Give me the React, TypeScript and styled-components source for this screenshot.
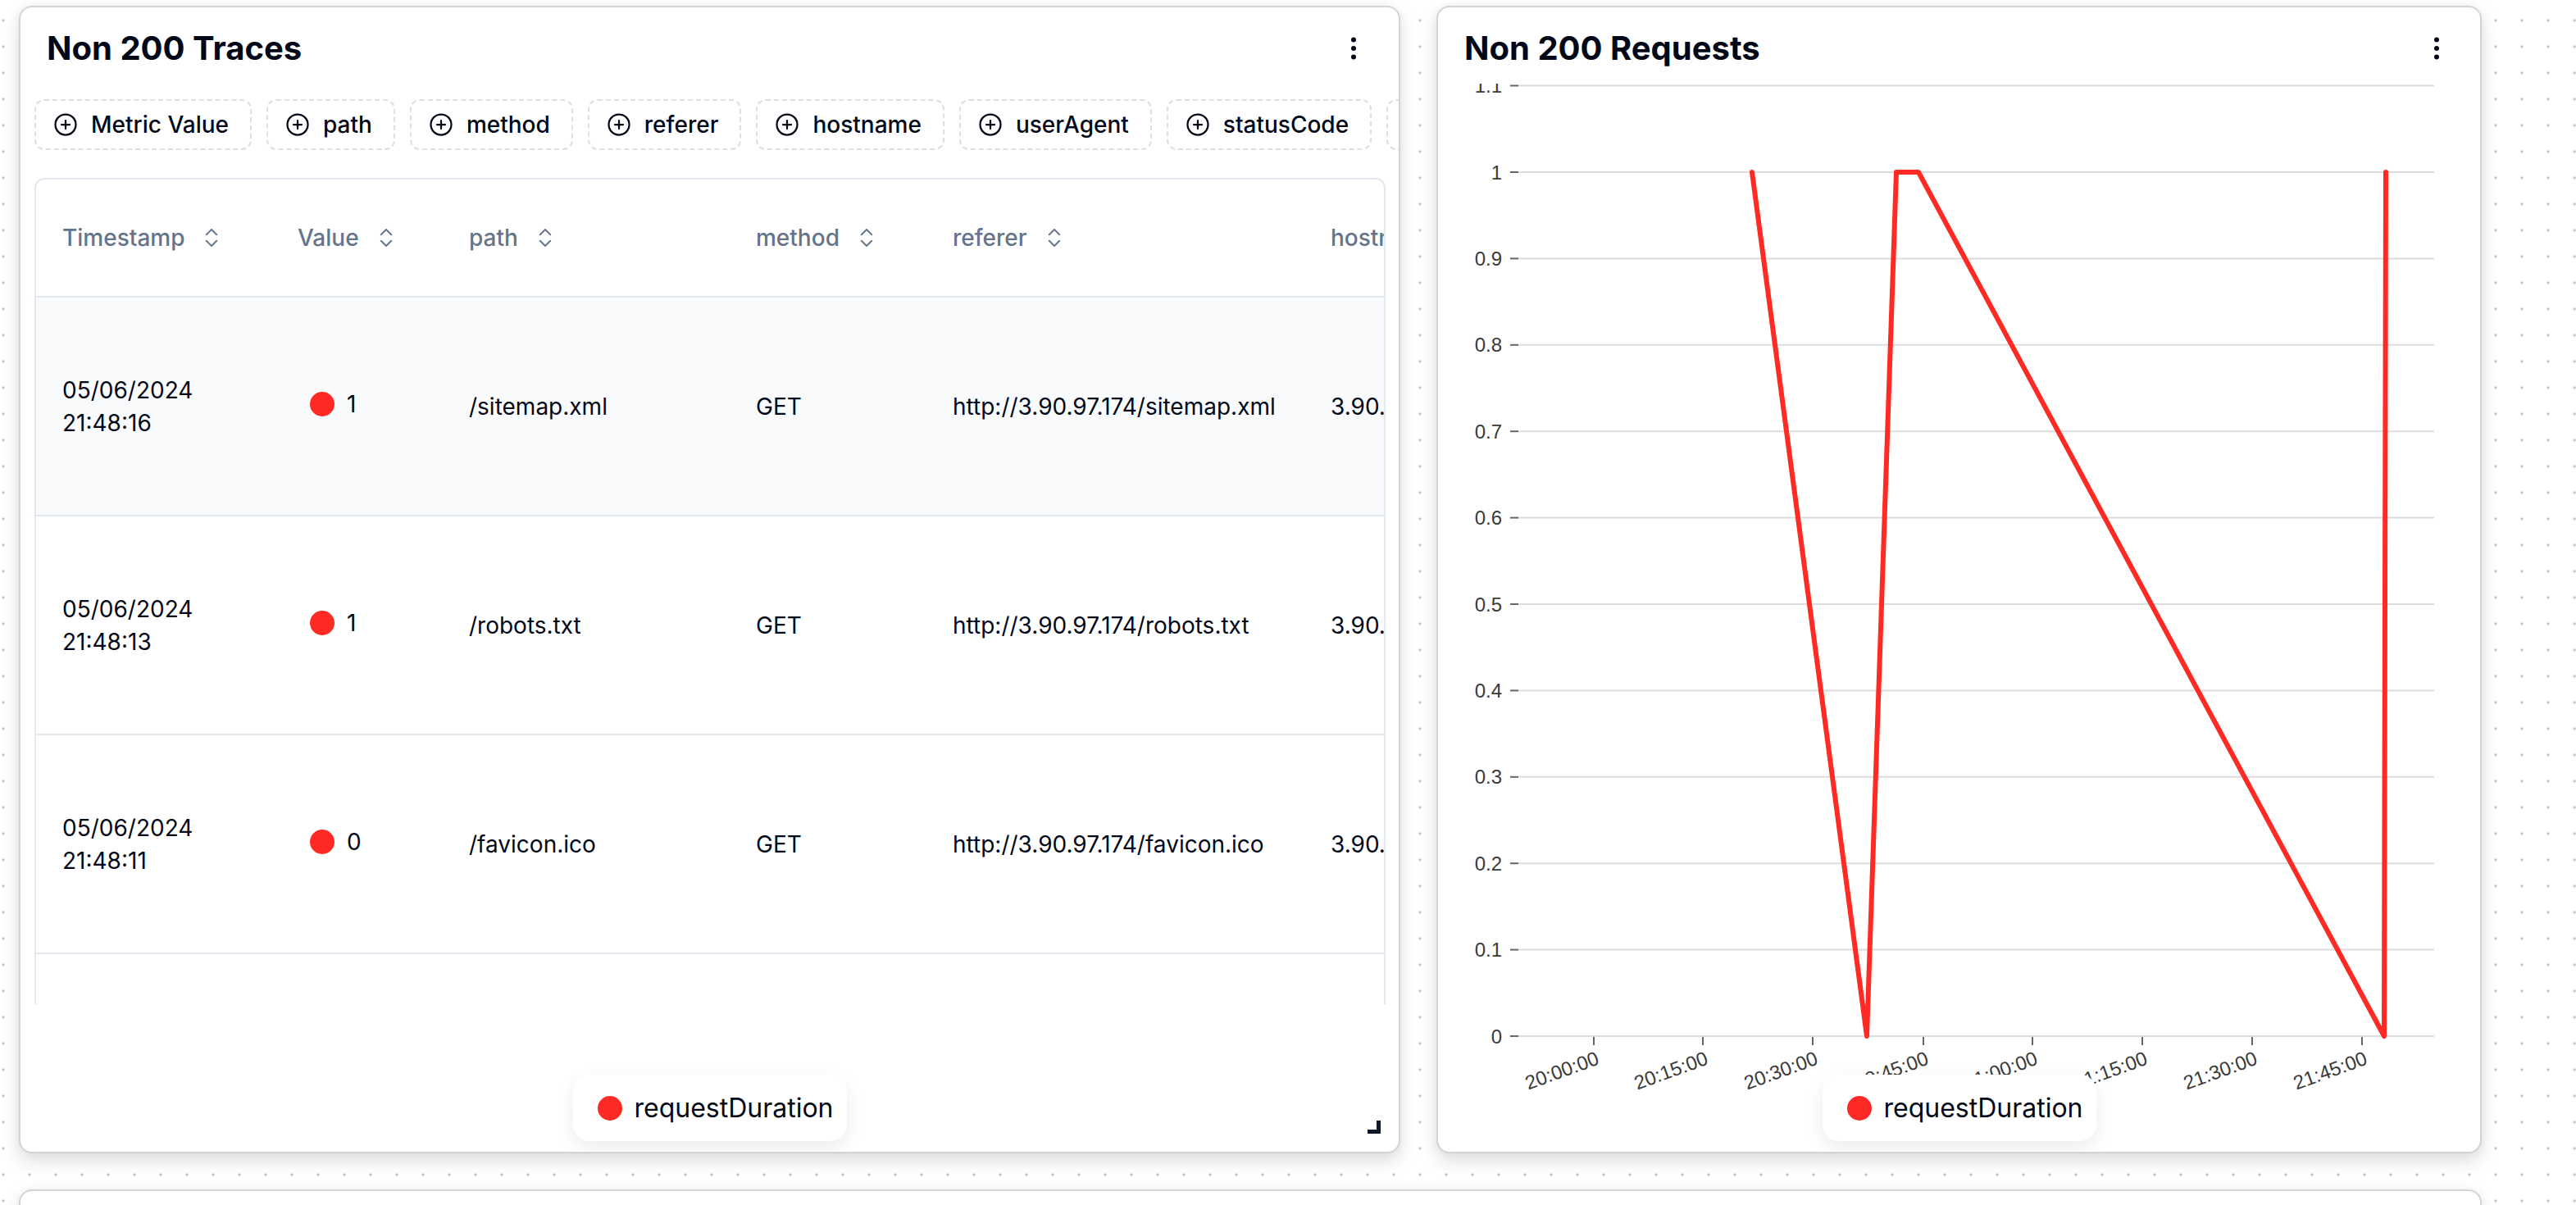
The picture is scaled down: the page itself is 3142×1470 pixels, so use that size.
import React from "react";
import styled, { createGlobalStyle } from "styled-components";
import { ChevronsUpDown, CirclePlus, EllipsisVertical } from "lucide-react";

const GlobalStyle = createGlobalStyle`
  html, body {
    margin: 0;
    padding: 0;
    overflow: hidden;
  }
  body {
    font-family: Inter, "Noto Sans", sans-serif;
    color: #020817;
    background-color: #ffffff;
    background-image: radial-gradient(circle, #c6c6c6 1.3px, transparent 1.9px);
    background-size: 32px 32px;
    background-position: -12px 9px;
  }
`;

const Board = styled.main`
  display: grid;
  grid-template-columns: 1685px 1275px;
  grid-template-rows: 1400px 320px;
  gap: 44px;
  padding: 7px 0 0 23px;
  height: 1470px;
  box-sizing: border-box;
  overflow: hidden;
`;

const Card = styled.section<{ $wide?: boolean }>`
  position: relative;
  display: flex;
  flex-direction: column;
  grid-column: ${({ $wide }) => ($wide ? "1 / -1" : "auto")};
  background: #ffffff;
  border: 2px solid #d4d4d4;
  border-radius: 16px;
  box-shadow: 0 10px 22px rgba(0, 0, 0, 0.13), 0 0 10px rgba(0, 0, 0, 0.05);
  box-sizing: border-box;
  overflow: hidden;
`;

const CardHeader = styled.header<{ $right: number }>`
  display: flex;
  align-items: center;
  justify-content: space-between;
  padding: 22px ${({ $right }) => $right}px 0 32px;
`;

const Title = styled.h2`
  margin: 0;
  font-size: 40px;
  line-height: 56px;
  font-weight: 700;
  color: #020817;
`;

const MenuButton = styled.button`
  display: flex;
  align-items: center;
  justify-content: center;
  width: 40px;
  height: 40px;
  padding: 0;
  border: 0;
  background: none;
  color: #020817;
`;

const ChipRow = styled.div`
  display: flex;
  gap: 18px;
  margin-top: 34px;
  padding-left: 17px;
`;

const Chip = styled.button`
  flex-shrink: 0;
  display: flex;
  align-items: center;
  gap: 16px;
  height: 62px;
  padding: 0 26px 0 21px;
  border: 2px dashed #dcdfe4;
  border-radius: 12px;
  background: #ffffff;
  font-family: Inter, sans-serif;
  font-size: 28px;
  font-weight: 500;
  color: #020817;
  white-space: nowrap;
`;

const TableWrap = styled.div`
  margin: 34px 16px 0 17px;
  height: 1006px;
  border: 2px solid #e2e8f0;
  border-bottom: 0;
  border-radius: 12px 12px 0 0;
  overflow: hidden;
`;

const Table = styled.table`
  width: 2700px;
  table-layout: fixed;
  border-collapse: separate;
  border-spacing: 0;
  font-size: 28px;
  line-height: 40px;
`;

const Th = styled.th`
  height: 142px;
  padding: 0 32px;
  border-bottom: 2px solid #e2e8f0;
  text-align: left;
  font-weight: 500;
  color: #64748b;
  white-space: nowrap;
`;

const HeadLabel = styled.span`
  display: inline-flex;
  align-items: center;
  gap: 18px;
`;

const Row = styled.tr<{ $shaded?: boolean }>`
  background: ${({ $shaded }) => ($shaded ? "#f8fafc" : "transparent")};
`;

const Td = styled.td`
  height: 265px;
  padding: 0 32px;
  border-bottom: 2px solid #e2e8f0;
  color: #020817;
  white-space: nowrap;
  overflow: hidden;
`;

const Stamp = styled.span`
  display: block;
`;

const ValueCell = styled.span`
  display: inline-flex;
  align-items: center;
  gap: 15px;
  margin-left: 15px;
`;

const Dot = styled.span<{ $size: number }>`
  flex-shrink: 0;
  width: ${({ $size }) => $size}px;
  height: ${({ $size }) => $size}px;
  border-radius: 50%;
  background: #ff2a24;
`;

const Legend = styled.div`
  position: absolute;
  left: 50%;
  bottom: 13px;
  transform: translateX(-50%);
  display: flex;
  align-items: center;
  gap: 15px;
  height: 81px;
  padding: 0 16px 0 30px;
  box-sizing: border-box;
  background: #ffffff;
  border-radius: 20px;
  box-shadow: 0 8px 22px rgba(0, 0, 0, 0.08);
  font-size: 32px;
  color: #020817;
  white-space: nowrap;
`;

const ResizeHandle = styled.svg`
  position: absolute;
  right: 22px;
  bottom: 22px;
`;

const Chart = styled.svg`
  display: block;
  margin-top: 15px;
  flex-shrink: 0;
`;

const columns = [
  { label: "Timestamp", width: 287 },
  { label: "Value", width: 209 },
  { label: "path", width: 350 },
  { label: "method", width: 240 },
  { label: "referer", width: 461 },
  { label: "hostname", width: 400 },
  { label: "userAgent", width: 420 },
  { label: "statusCode", width: 333 },
];

const rows = [
  { date: "05/06/2024", time: "21:48:16", value: 1, path: "/sitemap.xml" },
  { date: "05/06/2024", time: "21:48:13", value: 1, path: "/robots.txt" },
  { date: "05/06/2024", time: "21:48:11", value: 0, path: "/favicon.ico" },
  { date: "05/06/2024", time: "21:48:09", value: 1, path: "/" },
];

const filters = [
  "Metric Value",
  "path",
  "method",
  "referer",
  "hostname",
  "userAgent",
  "statusCode",
  "responseTime",
];

const TracesTable = () => (
  <TableWrap>
    <Table>
      <colgroup>
        {columns.map((c) => (
          <col key={c.label} style={{ width: c.width }} />
        ))}
      </colgroup>
      <thead>
        <tr>
          {columns.map((c) => (
            <Th key={c.label}>
              <HeadLabel>
                {c.label}
                <ChevronsUpDown size={30} strokeWidth={1.5} />
              </HeadLabel>
            </Th>
          ))}
        </tr>
      </thead>
      <tbody>
        {rows.map((r, idx) => (
          <Row key={r.time} $shaded={idx === 0}>
            <Td>
              <Stamp>{r.date}</Stamp>
              <Stamp>{r.time}</Stamp>
            </Td>
            <Td>
              <ValueCell>
                <Dot $size={30} />
                {r.value}
              </ValueCell>
            </Td>
            <Td>{r.path}</Td>
            <Td>GET</Td>
            <Td>{`http://3.90.97.174${r.path}`}</Td>
            <Td>3.90.97.174</Td>
            <Td>Mozilla/5.0</Td>
            <Td>404</Td>
          </Row>
        ))}
      </tbody>
    </Table>
  </TableWrap>
);

// chart coords: origin at the card's inner top-left, 15px under the header
const yOf = (v: number) => 1162 - 1054 * v;
const yTicks = [0, 0.1, 0.2, 0.3, 0.4, 0.5, 0.6, 0.7, 0.8, 0.9, 1, 1.1];
const xTicks = [
  { x: 190, label: "20:00:00" },
  { x: 323, label: "20:15:00" },
  { x: 457, label: "20:30:00" },
  { x: 592, label: "20:45:00" },
  { x: 725, label: "21:00:00" },
  { x: 859, label: "21:15:00" },
  { x: 993, label: "21:30:00" },
  { x: 1127, label: "21:45:00" },
];
const series: [number, number][] = [
  [383, 1],
  [523, 0],
  [559, 1],
  [586, 1],
  [1154, 0],
  [1156, 1],
];

const RequestsChart = () => (
  <Chart width={1271} height={1230} viewBox="0 0 1271 1230">
    <g fontFamily='"Liberation Sans", Arial, sans-serif' fontSize={24} fill="#3a3a3a">
      {yTicks.map((v) => (
        <g key={v}>
          <line x1={98} x2={1215} y1={yOf(v)} y2={yOf(v)} stroke="#dcdcdc" strokeWidth={2} />
          <line x1={88} x2={98} y1={yOf(v)} y2={yOf(v)} stroke="#666" strokeWidth={2} />
          <text x={78} y={yOf(v)} textAnchor="end" dominantBaseline="central">
            {v}
          </text>
        </g>
      ))}
      {xTicks.map((t) => (
        <g key={t.label}>
          <line x1={t.x} x2={t.x} y1={1163} y2={1173} stroke="#666" strokeWidth={2} />
          <text
            x={t.x + 2}
            y={1180}
            dy="0.7em"
            textAnchor="end"
            transform={`rotate(-20 ${t.x + 2} 1180)`}
          >
            {t.label}
          </text>
        </g>
      ))}
    </g>
    <polyline
      points={series.map(([x, v]) => `${x},${yOf(v)}`).join(" ")}
      fill="none"
      stroke="#ff2a24"
      strokeWidth={6}
      strokeLinejoin="round"
      strokeLinecap="round"
    />
  </Chart>
);

const App = () => (
  <>
    <GlobalStyle />
    <Board>
      <Card>
        <CardHeader $right={35}>
          <Title>Non 200 Traces</Title>
          <MenuButton aria-label="menu">
            <EllipsisVertical size={36} strokeWidth={2} />
          </MenuButton>
        </CardHeader>
        <ChipRow>
          {filters.map((f) => (
            <Chip key={f}>
              <CirclePlus size={30} strokeWidth={1.8} />
              {f}
            </Chip>
          ))}
        </ChipRow>
        <TracesTable />
        <Legend>
          <Dot $size={30} />
          requestDuration
        </Legend>
        <ResizeHandle width={16} height={16} viewBox="0 0 16 16">
          <polygon points="11,0 16,0 16,16 0,16 0,11 11,11" fill="#0f172a" />
        </ResizeHandle>
      </Card>
      <Card>
        <CardHeader $right={33}>
          <Title>Non 200 Requests</Title>
          <MenuButton aria-label="menu">
            <EllipsisVertical size={36} strokeWidth={2} />
          </MenuButton>
        </CardHeader>
        <RequestsChart />
        <Legend>
          <Dot $size={30} />
          requestDuration
        </Legend>
      </Card>
      <Card $wide />
    </Board>
  </>
);

export default App;
